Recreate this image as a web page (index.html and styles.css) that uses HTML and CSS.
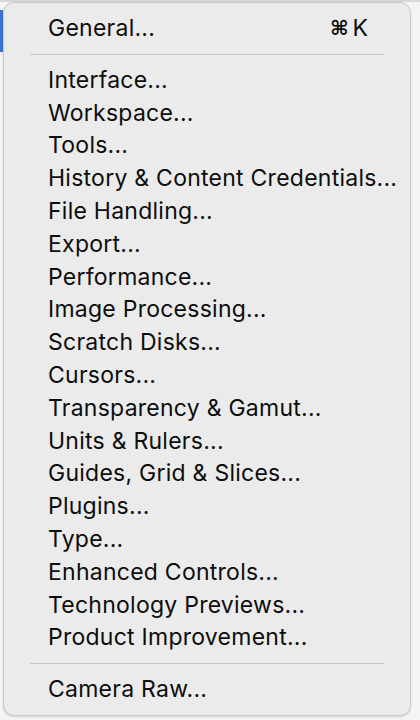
FILE: index.html
```html
<!DOCTYPE html>
<html>
<head>
<meta charset="utf-8">
<link rel="stylesheet" href="styles.css">
</head>
<body>
<div class="stage">
  <div class="edge"></div>
  <div class="menu">
    <div class="item"><span>General...</span><span class="key"><span class="cmd">⌘</span>K</span></div>
    <div class="sep"></div>
    <div class="item">Interface...</div>
    <div class="item">Workspace...</div>
    <div class="item">Tools...</div>
    <div class="item">History &amp; Content Credentials...</div>
    <div class="item">File Handling...</div>
    <div class="item">Export...</div>
    <div class="item">Performance...</div>
    <div class="item">Image Processing...</div>
    <div class="item">Scratch Disks...</div>
    <div class="item">Cursors...</div>
    <div class="item">Transparency &amp; Gamut...</div>
    <div class="item">Units &amp; Rulers...</div>
    <div class="item">Guides, Grid &amp; Slices...</div>
    <div class="item">Plugins...</div>
    <div class="item">Type...</div>
    <div class="item">Enhanced Controls...</div>
    <div class="item">Technology Previews...</div>
    <div class="item">Product Improvement...</div>
    <div class="sep"></div>
    <div class="item">Camera Raw...</div>
  </div>
</div>
</body>
</html>
```
FILE: styles.css
```css
html, body {
  margin: 0;
  padding: 0;
  width: 420px;
  height: 720px;
  overflow: hidden;
  background: #f4f4f4;
}
.stage {
  display: flex;
  align-items: flex-start;
  height: 720px;
  border-top: 2px solid #d6d6d6;
  box-sizing: border-box;
}
.edge {
  width: 3px;
  height: 42px;
  margin-top: 8px;
  background: #3b73d1;
  flex: none;
}
.menu {
  width: 408px;
  height: 714px;
  box-sizing: border-box;
  background: #ebebeb;
  border: 1px solid #c9c9c9;
  border-radius: 11px;
  box-shadow: 0 1px 2px rgba(0,0,0,0.15);
  padding: 9px 0 0 0;
  display: flex;
  flex-direction: column;
  font-family: Inter, "Liberation Sans", Arial, sans-serif;
  font-size: 23px;
  letter-spacing: 0.25px;
  color: #0d0d0d;
}
.item {
  height: 32.8px;
  line-height: 32.8px;
  padding-left: 44px;
  padding-right: 42px;
  display: flex;
  justify-content: space-between;
  white-space: nowrap;
}
.key {
  display: flex;
  align-items: center;
  gap: 4px;
  letter-spacing: 0;
}
.cmd {
  font-family: "DejaVu Sans", sans-serif;
  font-weight: bold;
  font-size: 20px;
}
.sep {
  height: 1px;
  background: #c7c7c7;
  margin: 9px 26px 9px 26px;
}
```
